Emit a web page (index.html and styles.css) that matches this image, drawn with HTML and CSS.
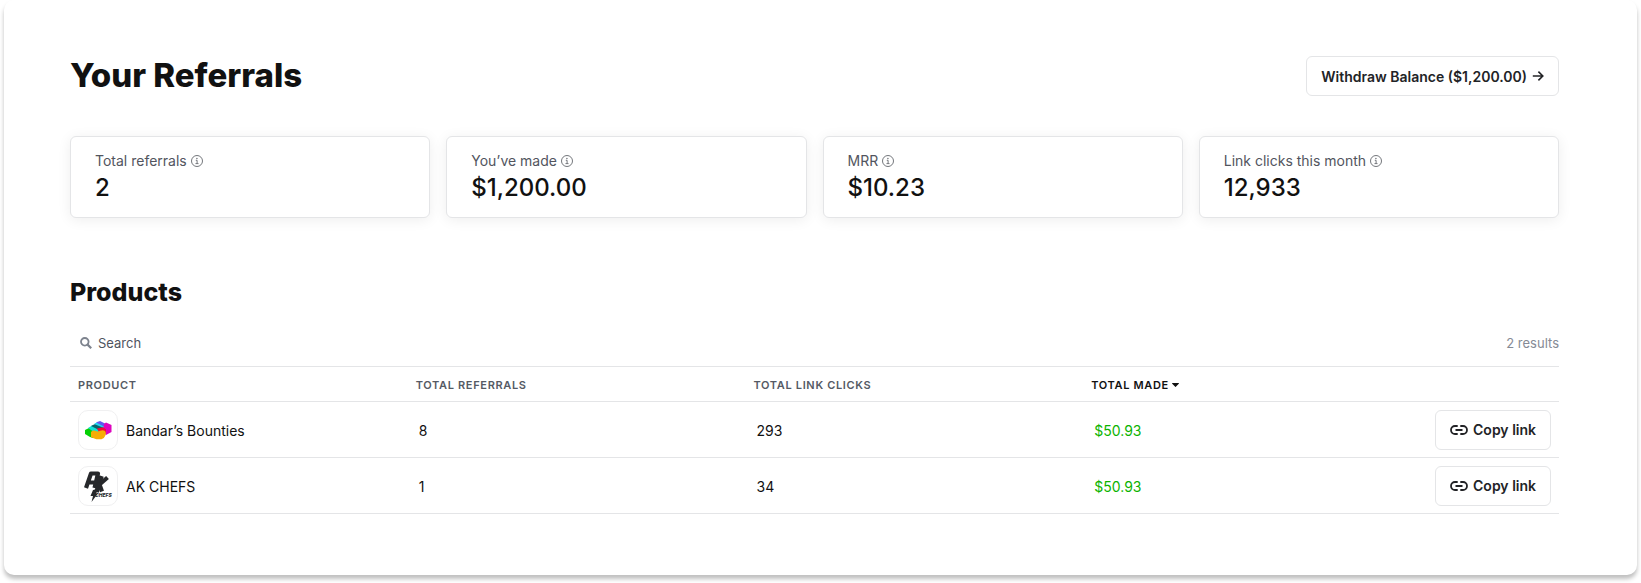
FILE: index.html
```
<!DOCTYPE html>
<html lang="en">
<head>
    <meta charset="UTF-8">
    <meta name="viewport" content="width=device-width, initial-scale=1.0">
    <title>Your Referrals</title>
    <link rel="stylesheet" href="styles.css">
</head>
<body>
    <!-- Shared icons -->
    <svg class="sprite" aria-hidden="true">
        <symbol id="icon-info" viewBox="0 0 12 12">
            <circle cx="6" cy="6" r="5.5" fill="none" stroke="currentColor" stroke-width="1"/>
            <circle cx="5.9" cy="3.5" r="0.8" fill="currentColor"/>
            <path d="M4.8 5.3h1.3v3.2M4.5 8.6h3" fill="none" stroke="currentColor" stroke-width="1"/>
        </symbol>
        <symbol id="icon-link" viewBox="0 0 18 10">
            <path d="M7.7 1H5a4 4 0 0 0 0 8h2.7M10.3 1H13a4 4 0 0 1 0 8h-2.7M5.5 5h7" fill="none" stroke="currentColor" stroke-width="1.8"/>
        </symbol>
    </svg>

    <main class="container">
        <header class="page-header">
            <h1>Your Referrals</h1>
            <button type="button" class="button">
                Withdraw Balance ($1,200.00)
                <svg class="arrow-icon" viewBox="0 0 12 12" aria-hidden="true">
                    <path d="M0.8 6h10M6.4 1.6L10.8 6l-4.4 4.4" fill="none" stroke="currentColor" stroke-width="1.6"/>
                </svg>
            </button>
        </header>

        <section class="stats">
            <div class="stat">
                <div class="stat-label">Total referrals <svg class="info-icon"><use href="#icon-info"/></svg></div>
                <div class="stat-value">2</div>
            </div>
            <div class="stat">
                <div class="stat-label">You’ve made <svg class="info-icon"><use href="#icon-info"/></svg></div>
                <div class="stat-value">$1,200.00</div>
            </div>
            <div class="stat">
                <div class="stat-label">MRR <svg class="info-icon"><use href="#icon-info"/></svg></div>
                <div class="stat-value">$10.23</div>
            </div>
            <div class="stat">
                <div class="stat-label">Link clicks this month <svg class="info-icon"><use href="#icon-info"/></svg></div>
                <div class="stat-value">12,933</div>
            </div>
        </section>

        <section class="products">
            <h2>Products</h2>
            <div class="toolbar">
                <div class="search">
                    <label for="search" aria-label="Search">
                        <svg class="search-icon" viewBox="0 0 12 12">
                            <circle cx="4.8" cy="4.8" r="3.8" fill="none" stroke="currentColor" stroke-width="1.8"/>
                            <path d="M7.6 7.6l3.6 3.6" stroke="currentColor" stroke-width="2.2"/>
                        </svg>
                    </label>
                    <input type="text" id="search" placeholder="Search">
                </div>
                <span class="results">2 results</span>
            </div>

            <table class="product-table">
                <thead>
                    <tr>
                        <th>Product</th>
                        <th>Total referrals</th>
                        <th>Total link clicks</th>
                        <th class="sorted">Total made <svg class="caret" viewBox="0 0 7 4"><path d="M0.5 0h6a0.4 0.4 0 0 1 0.3 0.7L3.8 3.8a0.4 0.4 0 0 1-0.6 0L0.2 0.7A0.4 0.4 0 0 1 0.5 0z" fill="currentColor"/></svg></th>
                        <th class="actions"></th>
                    </tr>
                </thead>
                <tbody>
                    <tr>
                        <td>
                            <div class="product">
                                <span class="logo">
                                    <svg viewBox="1 1 38 38">
                                        <path d="M7 20l6-3 8 4-1 3-5 4-3-1-5-3z" fill="#05d005"/>
                                        <path d="M10 18l5-3 9 4-4 4-4-1z" fill="#13dfd6"/>
                                        <path d="M13 16l5-2.5 9 4-4 3.500z" fill="#08636d"/>
                                        <path d="M16 14l4-2.300 8 3.300-2 3z" fill="#20d7ef"/>
                                        <path d="M18 12.400L22 11l6 3-1 3z" fill="#6257ef"/>
                                        <path d="M26 14l2-1.500 5.500 2.500v7L28 25l-3-3z" fill="#dd05bd"/>
                                        <path d="M19 18.600l6-1.400 3 2v4l-7-1z" fill="#f20c38"/>
                                        <path d="M13 22q2-2 4-1.300 3 1.500 5 0 3-1 4.500 0 2 1 1 4.500-1 3-4 4h-5q-3-.700-5.500-2.200z" fill="#f6ad04"/>
                                    </svg>
                                </span>
                                <span class="name">Bandar’s Bounties</span>
                            </div>
                        </td>
                        <td class="number">8</td>
                        <td class="number">293</td>
                        <td class="number money">$50.93</td>
                        <td class="actions">
                            <button type="button" class="button"><svg class="link-icon"><use href="#icon-link"/></svg>Copy link</button>
                        </td>
                    </tr>
                    <tr>
                        <td>
                            <div class="product">
                                <span class="logo">
                                    <svg viewBox="1 1 38 38">
                                        <!-- monogram with a lightning tail -->
                                        <g fill="none" stroke="#26282b" stroke-linejoin="round">
                                            <path d="M8 22L13 7.500h7L16.500 22M11 16.500h8" stroke-width="4.200"/>
                                            <path d="M23.500 10l-5 16" stroke-width="4.600"/>
                                            <path d="M29.500 11.500l-8 7 2.500 7" stroke-width="4.200"/>
                                        </g>
                                        <path d="M15 24l5-1-2 5h1.500l-6 8 1.500-6h-2.500z" fill="#26282b"/>
                                        <text class="logo-text" x="17" y="31">CHEFS</text>
                                    </svg>
                                </span>
                                <span class="name">AK CHEFS</span>
                            </div>
                        </td>
                        <td class="number">1</td>
                        <td class="number">34</td>
                        <td class="number money">$50.93</td>
                        <td class="actions">
                            <button type="button" class="button"><svg class="link-icon"><use href="#icon-link"/></svg>Copy link</button>
                        </td>
                    </tr>
                </tbody>
            </table>
        </section>
    </main>
</body>
</html>
```

FILE: styles.css
```
* {
    box-sizing: border-box;
}
body {
    margin: 0;
    padding: 0 4px 8px;
    font-family: Inter, "Liberation Sans", sans-serif;
    font-size: 14px;
    line-height: 20px;
    color: #111;
    background-color: #fff;
}
.sprite {
    display: none;
}
.container {
    padding: 56px 78px 61px 66px;
    border-radius: 10px;
    background-color: #fff;
    box-shadow: 0 4px 4px rgba(0, 0, 0, 0.25);
}
.page-header {
    display: flex;
    justify-content: space-between;
    align-items: center;
    margin-bottom: 40px;
}
h1, h2 {
    margin: 0;
    font-weight: 800;
}
h1 {
    font-size: 33px;
    line-height: 38px;
    padding-bottom: 2px;
}
h2 {
    font-size: 25px;
    line-height: 32px;
}
.button {
    display: inline-flex;
    align-items: center;
    gap: 5px;
    height: 40px;
    padding: 0 14px;
    border: 1px solid #e4e5e7;
    border-radius: 6px;
    background-color: #fff;
    color: #222326;
    font-family: inherit;
    font-size: 14px;
    font-weight: 600;
    cursor: pointer;
}
.button:hover {
    background-color: #f7f7f8;
}
.arrow-icon {
    width: 12px;
    height: 12px;
}
.link-icon {
    width: 18px;
    height: 10px;
}

/* Stat cards */
.stats {
    display: grid;
    grid-template-columns: repeat(4, 1fr);
    gap: 16px;
}
.stat {
    padding: 13px 24px 14px;
    border: 1px solid #e4e5e7;
    border-radius: 6px;
    background-color: #fff;
    box-shadow: 0 2px 14px rgba(0, 0, 0, 0.07);
}
.stat-label {
    display: flex;
    align-items: center;
    gap: 4px;
    line-height: 22px;
    color: #52555e;
}
.stat-value {
    font-size: 24px;
    font-weight: 500;
    line-height: 31px;
}
.info-icon {
    width: 12px;
    height: 12px;
    color: #74777c;
}

/* Products */
.products {
    margin-top: 58px;
}
.toolbar {
    display: flex;
    justify-content: space-between;
    align-items: center;
    height: 46px;
    margin-top: 12px;
}
.search {
    display: flex;
    align-items: center;
    gap: 6px;
    padding-left: 10px;
}
.search label {
    display: flex;
}
.search-icon {
    width: 12px;
    height: 12px;
    color: #7d838e;
}
.search input {
    padding: 0;
    border: 0;
    outline: none;
    background: none;
    font-family: inherit;
    font-size: 13px;
    color: #111;
}
.search input::placeholder {
    color: #4f545e;
    opacity: 1;
}
.results {
    font-size: 13px;
    color: #858a95;
}
.product-table {
    width: 100%;
    table-layout: fixed;
    border-collapse: collapse;
    border-top: 1px solid #e4e5e7;
}
.product-table tr {
    border-bottom: 1px solid #e4e5e7;
}
.product-table th {
    height: 35px;
    padding: 2px 8px 0;
    font-size: 11px;
    font-weight: 600;
    letter-spacing: 0.06em;
    text-align: left;
    text-transform: uppercase;
    color: #555a64;
}
.product-table th.sorted {
    color: #111;
}
.caret {
    width: 7px;
    height: 4px;
    vertical-align: 2px;
}
.product-table td {
    height: 56px;
    padding: 0 8px;
}
.product-table td.number {
    padding: 2px 8px 0 11px;
}
.product-table td.money {
    color: #0cb300;
}
.product-table .actions {
    width: 138px;
    text-align: right;
}
.product {
    display: flex;
    align-items: center;
    gap: 8px;
}
.name {
    padding-top: 2px;
}
.logo {
    width: 40px;
    height: 40px;
    border: 1px solid #f0f0f1;
    border-radius: 10px;
}
.logo svg {
    display: block;
}
.logo-text {
    font-size: 5px;
    font-style: italic;
    font-weight: 800;
    fill: #26282b;
}
```
